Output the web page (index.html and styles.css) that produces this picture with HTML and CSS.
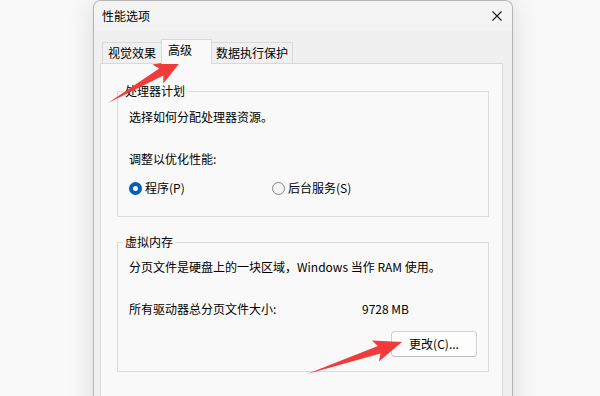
FILE: index.html
```html
<!DOCTYPE html>
<html lang="zh-CN">
<head>
<meta charset="utf-8">
<title>性能选项</title>
<link rel="stylesheet" href="styles.css">
</head>
<body>
<div class="stage">
  <div class="dialog">
    <div class="titlebar">
      <span class="title">性能选项</span>
      <svg class="close" width="10" height="10" viewBox="0 0 10 10"><path d="M0.5 0.5L9.5 9.5M9.5 0.5L0.5 9.5" stroke="#1a1a1a" stroke-width="1.1" fill="none"/></svg>
    </div>
    <div class="content">
      <div class="tabs">
        <div class="tab tab-visual">视觉效果</div>
        <div class="tab tab-adv active">高级</div>
        <div class="tab tab-dep">数据执行保护</div>
      </div>
      <div class="panel">
        <div class="group g-cpu">
          <span class="legend">处理器计划</span>
          <p class="line l-desc1">选择如何分配处理器资源。</p>
          <p class="line l-adjust">调整以优化性能:</p>
          <div class="radios">
            <span class="radio radio-first"><span class="dot checked"></span>程序(P)</span>
            <span class="radio"><span class="dot"></span>后台服务(S)</span>
          </div>
        </div>
        <div class="group g-vm">
          <span class="legend">虚拟内存</span>
          <p class="line l-desc2">分页文件是硬盘上的一块区域，Windows 当作 RAM 使用。</p>
          <div class="line l-total"><span class="total-label">所有驱动器总分页文件大小:</span><span class="total-value">9728 MB</span></div>
          <button class="btn">更改(C)...</button>
        </div>
      </div>
    </div>
  </div>
  <svg class="arrows" width="600" height="396" viewBox="0 0 600 396">
    <polygon points="108,103 159.2,68.6 152.3,64.6 182,60 163.3,83.6 163.3,75.5" fill="#f23a3a"/>
    <polygon points="307,374 377.9,345.9 371.9,340.5 402,342 378.9,361.4 380.5,353.5" fill="#f23a3a"/>
  </svg>
</div>
</body>
</html>
```

FILE: styles.css
```css
html, body {
  margin: 0;
  padding: 0;
}

body {
  background: #f9f9f9;
  font-family: "Noto Sans CJK SC", "Microsoft YaHei", sans-serif;
  font-size: 12px;
  color: #000;
  overflow: hidden;
}

.stage {
  position: relative;
  width: 600px;
  height: 396px;
  overflow: hidden;
  padding-left: 93px;
  box-sizing: border-box;
}

.dialog {
  width: 420px;
  height: 450px;
  box-sizing: border-box;
  border: 1px solid #b4b4b4;
  border-bottom: none;
  border-radius: 8px 8px 0 0;
  background: #f0f0f0;
  box-shadow: 0 0 26px rgba(0, 0, 0, 0.13);
  display: flex;
  flex-direction: column;
  overflow: hidden;
}

.titlebar {
  flex: none;
  height: 30px;
  display: flex;
  align-items: center;
  justify-content: space-between;
  padding-left: 8px;
  background: #f3f3f3;
}

.title {
  line-height: 16px;
}

.close {
  margin-right: 10px;
  display: block;
}

.content {
  flex: none;
  padding-top: 8px;
  display: flex;
  flex-direction: column;
}

.tabs {
  flex: none;
  display: flex;
  align-items: flex-end;
  padding-left: 8px;
  height: 24px;
}

.tab {
  box-sizing: border-box;
  height: 21px;
  border: 1px solid #d9d9d9;
  border-bottom: none;
  background: #f0f0f0;
  line-height: 16px;
  padding-top: 2px;
  white-space: nowrap;
}

.tab-visual {
  width: 60px;
  padding-left: 5px;
}

.tab-adv {
  width: 51px;
  margin-left: -1px;
  padding-left: 6px;
}

.tab-dep {
  width: 82px;
  margin-left: -1px;
  padding-left: 4px;
}

.tab.active {
  height: 25px;
  margin-bottom: -1px;
  background: #f9f9f9;
  position: relative;
  z-index: 1;
}

.panel {
  flex: none;
  margin-left: 6px;
  width: 403px;
  height: 380px;
  box-sizing: border-box;
  border: 1px solid #d9d9d9;
  background: #f9f9f9;
  display: flex;
  flex-direction: column;
}

.group {
  flex: none;
  margin-left: 16px;
  width: 372px;
  box-sizing: border-box;
  border: 1px solid #dcdcdc;
  display: flex;
  flex-direction: column;
}

.g-cpu {
  margin-top: 27px;
  padding-bottom: 20px;
}

.g-vm {
  margin-top: 25px;
  padding-bottom: 14px;
}

.legend {
  align-self: flex-start;
  margin: -9px 0 0 5px;
  padding: 0 2px;
  line-height: 16px;
  background: #f9f9f9;
}

.line {
  margin: 0;
  padding-left: 11px;
  line-height: 16px;
  white-space: nowrap;
}

.l-desc1 { margin-top: 10px; }
.l-adjust { margin-top: 26px; }
.l-desc2 { margin-top: 9px; }

.l-total {
  margin-top: 26px;
  display: flex;
}

.total-label {
  width: 233px;
}

.radios {
  margin-top: 13px;
  padding-left: 11px;
  display: flex;
  line-height: 16px;
}

.radio {
  display: flex;
  align-items: center;
  white-space: nowrap;
}

.radio-first {
  width: 143px;
}

.dot {
  width: 13px;
  height: 13px;
  box-sizing: border-box;
  border-radius: 50%;
  border: 1px solid #858585;
  background: #f4f4f4;
  margin-right: 3px;
  flex: none;
}

.dot.checked {
  border: 4px solid #005fb8;
  background: #ffffff;
}

.btn {
  align-self: flex-end;
  margin: 14px 11px 0 0;
  width: 86px;
  height: 26px;
  box-sizing: border-box;
  border: 1px solid #d0d0d0;
  border-bottom-color: #bcbcbc;
  border-radius: 4px;
  background: #fdfdfd;
  font-family: inherit;
  font-size: 12px;
  color: #000;
  line-height: 16px;
  padding: 0;
}

.arrows {
  position: absolute;
  left: 0;
  top: 0;
  pointer-events: none;
}
```
